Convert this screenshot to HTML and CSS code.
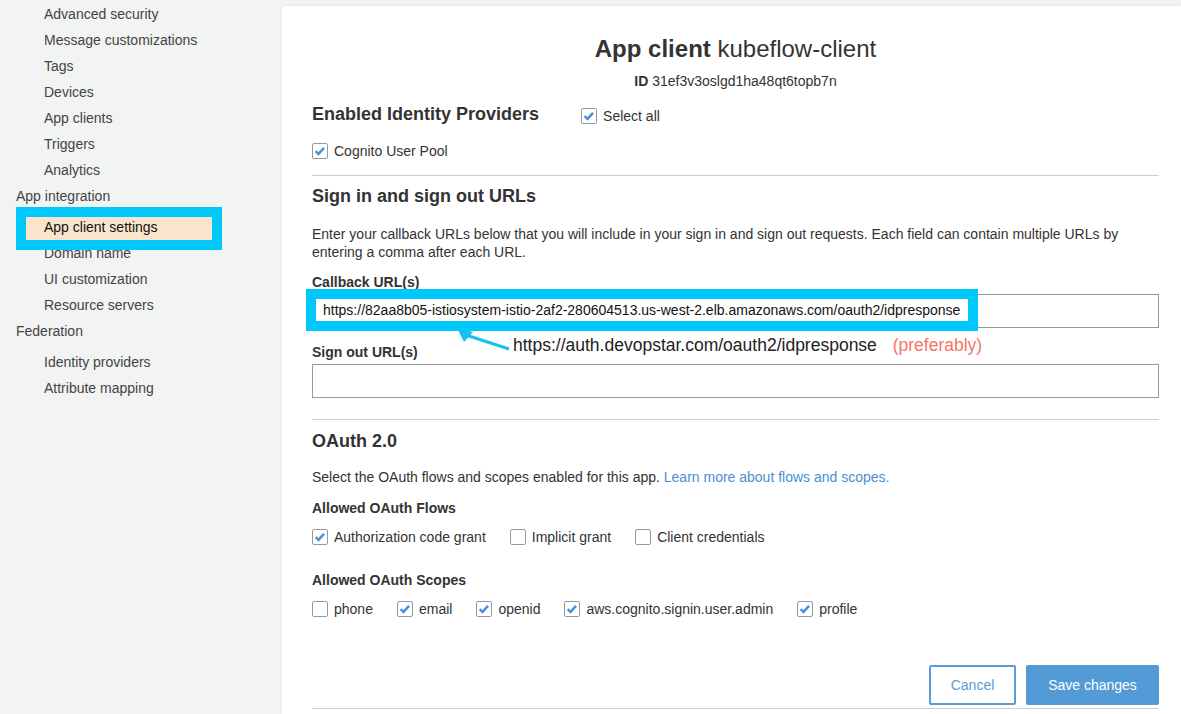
FILE: index.html
```html
<!DOCTYPE html>
<html lang="en">
<head>
  <meta charset="UTF-8">
  <meta name="viewport" content="width=device-width, initial-scale=1.0">
  <title>App client settings</title>
  <link rel="stylesheet" href="styles.css">
</head>
<body>

  <div class="page">

    <!-- Side navigation -->
    <nav class="sidebar">
      <ul class="nav">
        <li class="sub">Advanced security</li>
        <li class="sub">Message customizations</li>
        <li class="sub">Tags</li>
        <li class="sub">Devices</li>
        <li class="sub">App clients</li>
        <li class="sub">Triggers</li>
        <li class="sub">Analytics</li>
        <li class="group">App integration</li>
        <li class="sub active">App client settings</li>
        <li class="sub">Domain name</li>
        <li class="sub">UI customization</li>
        <li class="sub">Resource servers</li>
        <li class="group">Federation</li>
        <li class="sub">Identity providers</li>
        <li class="sub">Attribute mapping</li>
      </ul>
    </nav>

    <!-- Main panel -->
    <main class="panel">
      <h1 class="title"><strong>App client</strong> kubeflow-client</h1>
      <p class="client-id"><strong>ID</strong> 31ef3v3oslgd1ha48qt6topb7n</p>

      <div class="providers-head">
        <h2>Enabled Identity Providers</h2>
        <label class="check"><span class="cb"><svg viewBox="0 0 16 16"><path d="M3 8.2 L6.3 11.3 L12.6 4.4"/></svg></span>Select all</label>
      </div>
      <div class="check-row first">
        <label class="check"><span class="cb"><svg viewBox="0 0 16 16"><path d="M3 8.2 L6.3 11.3 L12.6 4.4"/></svg></span>Cognito User Pool</label>
      </div>

      <hr>

      <h2 class="section">Sign in and sign out URLs</h2>
      <p class="help">Enter your callback URLs below that you will include in your sign in and sign out requests. Each field can contain multiple URLs by entering a comma after each URL.</p>

      <div class="field-label first">Callback URL(s)</div>
      <div class="field">
        <input type="text" class="text-input">
        <!-- annotation pasted over the field -->
        <div class="callout">https://82aa8b05-istiosystem-istio-2af2-280604513.us-west-2.elb.amazonaws.com/oauth2/idpresponse</div>
        <svg class="arrow" width="60" height="26" viewBox="0 0 60 26">
          <line x1="55" y1="23" x2="12" y2="9" stroke="#14c3f2" stroke-width="3"/>
          <polygon points="3,2 19,6 10,16" fill="#14c3f2"/>
        </svg>
        <div class="note">https://auth.devopstar.com/oauth2/idpresponse <span class="pref">(preferably)</span></div>
      </div>

      <div class="field-label">Sign out URL(s)</div>
      <div class="field">
        <input type="text" class="text-input">
      </div>

      <hr class="lower">

      <h2 class="section">OAuth 2.0</h2>
      <p class="help tight">Select the OAuth flows and scopes enabled for this app. <a href="#">Learn more about flows and scopes.</a></p>

      <div class="field-label flows">Allowed OAuth Flows</div>
      <div class="check-row">
        <label class="check"><span class="cb"><svg viewBox="0 0 16 16"><path d="M3 8.2 L6.3 11.3 L12.6 4.4"/></svg></span>Authorization code grant</label>
        <label class="check"><span class="cb"></span>Implicit grant</label>
        <label class="check"><span class="cb"></span>Client credentials</label>
      </div>

      <div class="field-label scopes">Allowed OAuth Scopes</div>
      <div class="check-row">
        <label class="check"><span class="cb"></span>phone</label>
        <label class="check"><span class="cb"><svg viewBox="0 0 16 16"><path d="M3 8.2 L6.3 11.3 L12.6 4.4"/></svg></span>email</label>
        <label class="check"><span class="cb"><svg viewBox="0 0 16 16"><path d="M3 8.2 L6.3 11.3 L12.6 4.4"/></svg></span>openid</label>
        <label class="check"><span class="cb"><svg viewBox="0 0 16 16"><path d="M3 8.2 L6.3 11.3 L12.6 4.4"/></svg></span>aws.cognito.signin.user.admin</label>
        <label class="check"><span class="cb"><svg viewBox="0 0 16 16"><path d="M3 8.2 L6.3 11.3 L12.6 4.4"/></svg></span>profile</label>
      </div>

      <div class="actions">
        <button type="button" class="btn btn-cancel">Cancel</button>
        <button type="button" class="btn btn-save">Save changes</button>
      </div>
    </main>

  </div>

</body>
</html>
```

FILE: styles.css
```css
/* General Reset */
* {
  margin: 0;
  padding: 0;
  box-sizing: border-box;
}

body {
  font-family: "Liberation Sans", Arial, sans-serif;
  font-size: 14px;
  color: #333;
  background: #f2f3f3;
  overflow: hidden;
}

.page {
  display: flex;
  height: 714px;
}

/* Sidebar */
.sidebar {
  width: 282px;
  flex-shrink: 0;
}

.nav {
  list-style: none;
  padding-top: 1px;
}

.nav li {
  line-height: 26px;
  color: #444;
}

.nav .group {
  padding-left: 16px;
  margin-bottom: 5px;
}

.nav .sub {
  padding-left: 44px;
}

.nav .active {
  margin: 8px 70px 0 26px;
  padding-left: 18px;
  height: 23px;
  line-height: 21px;
  background: #fae5cc;
  color: #111;
  outline: 10px solid #00c8fb;
}

/* Main panel */
.panel {
  flex: 1;
  margin-top: 6px;
  background: #fff;
  padding: 0 22px 0 30px;
  box-shadow: 0 0 2px rgba(0, 0, 0, 0.12);
}

.title {
  text-align: center;
  font-size: 24px;
  line-height: 30px;
  font-weight: normal;
  color: #333;
  margin-top: 28px;
}

.client-id {
  text-align: center;
  line-height: 20px;
  margin-top: 7px;
}

h2 {
  font-size: 18px;
  line-height: 24px;
  color: #333;
}

.providers-head {
  display: flex;
  align-items: center;
  gap: 42px;
  margin-top: 11px;
}

.providers-head .check {
  margin-top: 3px;
}

.check-row {
  display: flex;
  gap: 24px;
  margin-top: 10px;
}

.check-row.first {
  margin-top: 15px;
}

.check {
  display: flex;
  align-items: center;
  gap: 6px;
  line-height: 20px;
  color: #333;
}

.cb {
  width: 16px;
  height: 16px;
  border: 1px solid #999;
  border-radius: 2px;
  background: #fff;
}

.cb svg {
  display: block;
  width: 14px;
  height: 14px;
}

.cb path {
  fill: none;
  stroke: #4a90d9;
  stroke-width: 2.8;
}

hr {
  border: none;
  border-top: 1px solid #ccc;
  margin: 14px 0 8px;
}

hr.lower {
  margin: 21px 0 9px;
}

.help {
  line-height: 18px;
  margin-top: 17px;
  color: #333;
}

.help.tight {
  margin-top: 15px;
}

.help a {
  color: #4a90d0;
  text-decoration: none;
}

.field-label {
  font-weight: bold;
  line-height: 18px;
  margin-top: 15px;
}

.field-label.first {
  margin-top: 12px;
}

.field-label.flows {
  margin-top: 13px;
}

.field-label.scopes {
  margin-top: 24px;
}

.field {
  position: relative;
  margin-top: 3px;
}

.text-input {
  display: block;
  width: 100%;
  height: 34px;
  border: 1px solid #999;
  background: #fff;
}

/* Screenshot annotation */
.callout {
  position: absolute;
  left: -6px;
  top: -5px;
  width: 672px;
  height: 42px;
  border: 10px solid #00c8fb;
  background: #fff;
  padding-left: 7px;
  font-size: 14px;
  line-height: 22px;
  color: #111;
  white-space: nowrap;
}

.arrow {
  position: absolute;
  left: 142px;
  top: 32px;
}

.note {
  position: absolute;
  left: 201px;
  top: 40px;
  font-size: 17.5px;
  line-height: 22px;
  color: #222;
  white-space: nowrap;
}

.pref {
  color: #f77563;
  margin-left: 11px;
}

/* Buttons */
.actions {
  display: flex;
  justify-content: flex-end;
  gap: 10px;
  margin-top: 46px;
  padding-bottom: 3px;
  border-bottom: 1px solid #ccc;
}

.btn {
  height: 40px;
  font-family: inherit;
  font-size: 14px;
  border-radius: 2px;
  cursor: pointer;
}

.btn-cancel {
  width: 87px;
  background: #fff;
  border: 2px solid #5b9bd8;
  color: #5b9bd8;
}

.btn-save {
  width: 133px;
  background: #539bd7;
  border: none;
  color: #fff;
}
```
